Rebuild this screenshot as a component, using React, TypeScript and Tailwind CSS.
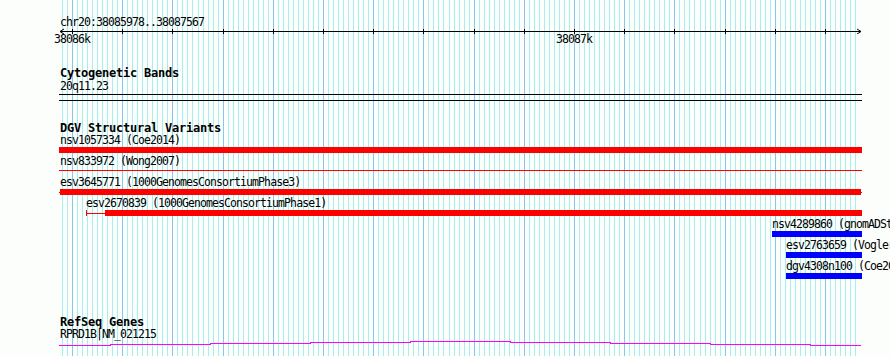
const minorColor = "#a8eeee";
const majorColor = "#88c6ee";

// 38086000 sits at x=72, 100bp = 50.2px
function bpToX(bp: number) {
  return Math.round(72 + (bp - 38086000) * 0.502);
}

function GridLines() {
  const lines = [];
  for (let bp = 38085980; bp <= 38087560; bp += 10) {
    const major = bp % 100 === 0;
    const x = bpToX(bp) + 0.5;
    lines.push(
      <line
        key={bp}
        x1={x}
        x2={x}
        y1={0}
        y2={356}
        stroke={major ? majorColor : minorColor}
        strokeWidth={1}
      />,
    );
  }
  return (
    <svg
      className="absolute left-0 top-0"
      width={890}
      height={356}
      shapeRendering="crispEdges"
    >
      {lines}
    </svg>
  );
}

function Axis() {
  const ticks = [];
  for (let bp = 38086000; bp <= 38087500; bp += 100) {
    const x = bpToX(bp) - 59 + 0.5;
    ticks.push(<line key={bp} x1={x} x2={x} y1={1} y2={6} stroke="#000" />);
  }
  return (
    <svg width={803} height={6} className="block" shapeRendering="crispEdges">
      <line x1={1} x2={802} y1={3.5} y2={3.5} stroke="#000" />
      {ticks}
      <polyline points="5,1 1,3.5 5,6" fill="none" stroke="#000" shapeRendering="auto" />
      <polyline points="798,1 802,3.5 798,6" fill="none" stroke="#000" shapeRendering="auto" />
    </svg>
  );
}

function GeneLine() {
  const segs: [number, number, number][] = [
    [0, 52, 5.5],
    [51, 152, 4.5],
    [151, 252, 3.5],
    [251, 352, 2.5],
    [351, 452, 1.5],
    [451, 552, 2.5],
    [551, 652, 3.5],
    [651, 752, 4.5],
    [751, 802, 5.5],
  ];
  return (
    <svg width={803} height={6} className="block" shapeRendering="crispEdges">
      {segs.map(([a, b, y]) => (
        <line key={a} x1={a} x2={b} y1={y} y2={y} stroke="#ff00ff" />
      ))}
    </svg>
  );
}

const small = "h-[12px] whitespace-nowrap text-[11.5px] leading-[11px] tracking-[-0.92px]";
const title = "h-[12px] whitespace-nowrap text-[12px] font-bold leading-[12px] tracking-[-0.22px]";

export default function App() {
  return (
    <div className="relative h-[356px] w-[890px] overflow-hidden bg-[#fcfefc] font-['DejaVu_Sans_Mono',monospace] text-black">
      <GridLines />
      <div className="relative pl-[59px] pt-[17px]">
        {/* ruler */}
        <div className="ml-px h-[11px] whitespace-nowrap text-[11.5px] leading-[11px] tracking-[-0.92px]">
          chr20:38085978..38087567
        </div>
        <Axis />
        <div className="relative h-[11px] text-[11.5px] leading-[11px] tracking-[-0.92px]">
          <span className="absolute left-[-5px] top-0 whitespace-nowrap">38086k</span>
          <span className="absolute left-[497px] top-0 whitespace-nowrap">38087k</span>
        </div>

        {/* cytobands */}
        <div className={`mt-[22px] ml-px ${title}`}>Cytogenetic Bands</div>
        <div className="ml-px mt-[2px] h-[11px] whitespace-nowrap text-[11.5px] leading-[11px] tracking-[-0.92px]">
          20q11.23
        </div>
        <div className="mt-[2px] h-[7px] w-[803px] border-y border-black" />

        {/* DGV */}
        <div className={`mt-[21px] ml-px ${title}`}>DGV Structural Variants</div>
        <div className="mt-px">
          <div className={`ml-px ${small}`}>nsv1057334 (Coe2014)</div>
          <div className="mb-[3px] h-[6px] w-[803px] bg-[#ff0000]" />

          <div className={`ml-px ${small}`}>nsv833972 (Wong2007)</div>
          <div className="mb-[3px] h-[6px] pt-[2px]">
            <div className="h-px w-[803px] bg-[#ff0000]" />
          </div>

          <div className={`ml-px ${small}`}>esv3645771 (1000GenomesConsortiumPhase3)</div>
          <div className="mb-[3px] flex h-[6px] w-[803px] items-center">
            <div className="h-px w-px bg-[#ff0000]" />
            <div className="h-[6px] flex-1 bg-[#ff0000]" />
            <div className="h-px w-px bg-[#ff0000]" />
          </div>

          <div className={`ml-[27px] ${small}`}>esv2670839 (1000GenomesConsortiumPhase1)</div>
          <div className="mb-[3px] ml-[27px] flex h-[6px] items-center">
            <div className="h-[6px] w-px bg-[#ff0000]" />
            <div className="h-px w-[18px] bg-[#ff0000]" />
            <div className="h-[6px] w-[757px] bg-[#ff0000]" />
          </div>

          <div className={`ml-[713px] ${small}`}>nsv4289860 (gnomADStructuralVariants)</div>
          <div className="mb-[3px] ml-[713px] h-[6px] w-[90px] bg-[#0000ff]" />

          <div className={`ml-[727px] ${small}`}>esv2763659 (Vogler2010)</div>
          <div className="mb-[3px] ml-[727px] h-[6px] w-[76px] bg-[#0000ff]" />

          <div className={`ml-[727px] ${small}`}>dgv4308n100 (Coe2014)</div>
          <div className="ml-[727px] h-[6px] w-[76px] bg-[#0000ff]" />
        </div>

        {/* RefSeq */}
        <div className={`mt-[37px] ml-px ${title}`}>RefSeq Genes</div>
        <div className="ml-px mt-px h-[11px] whitespace-nowrap text-[11.5px] leading-[11px] tracking-[-0.92px]">
          RPRD1B|NM_021215
        </div>
        <GeneLine />
      </div>
    </div>
  );
}
